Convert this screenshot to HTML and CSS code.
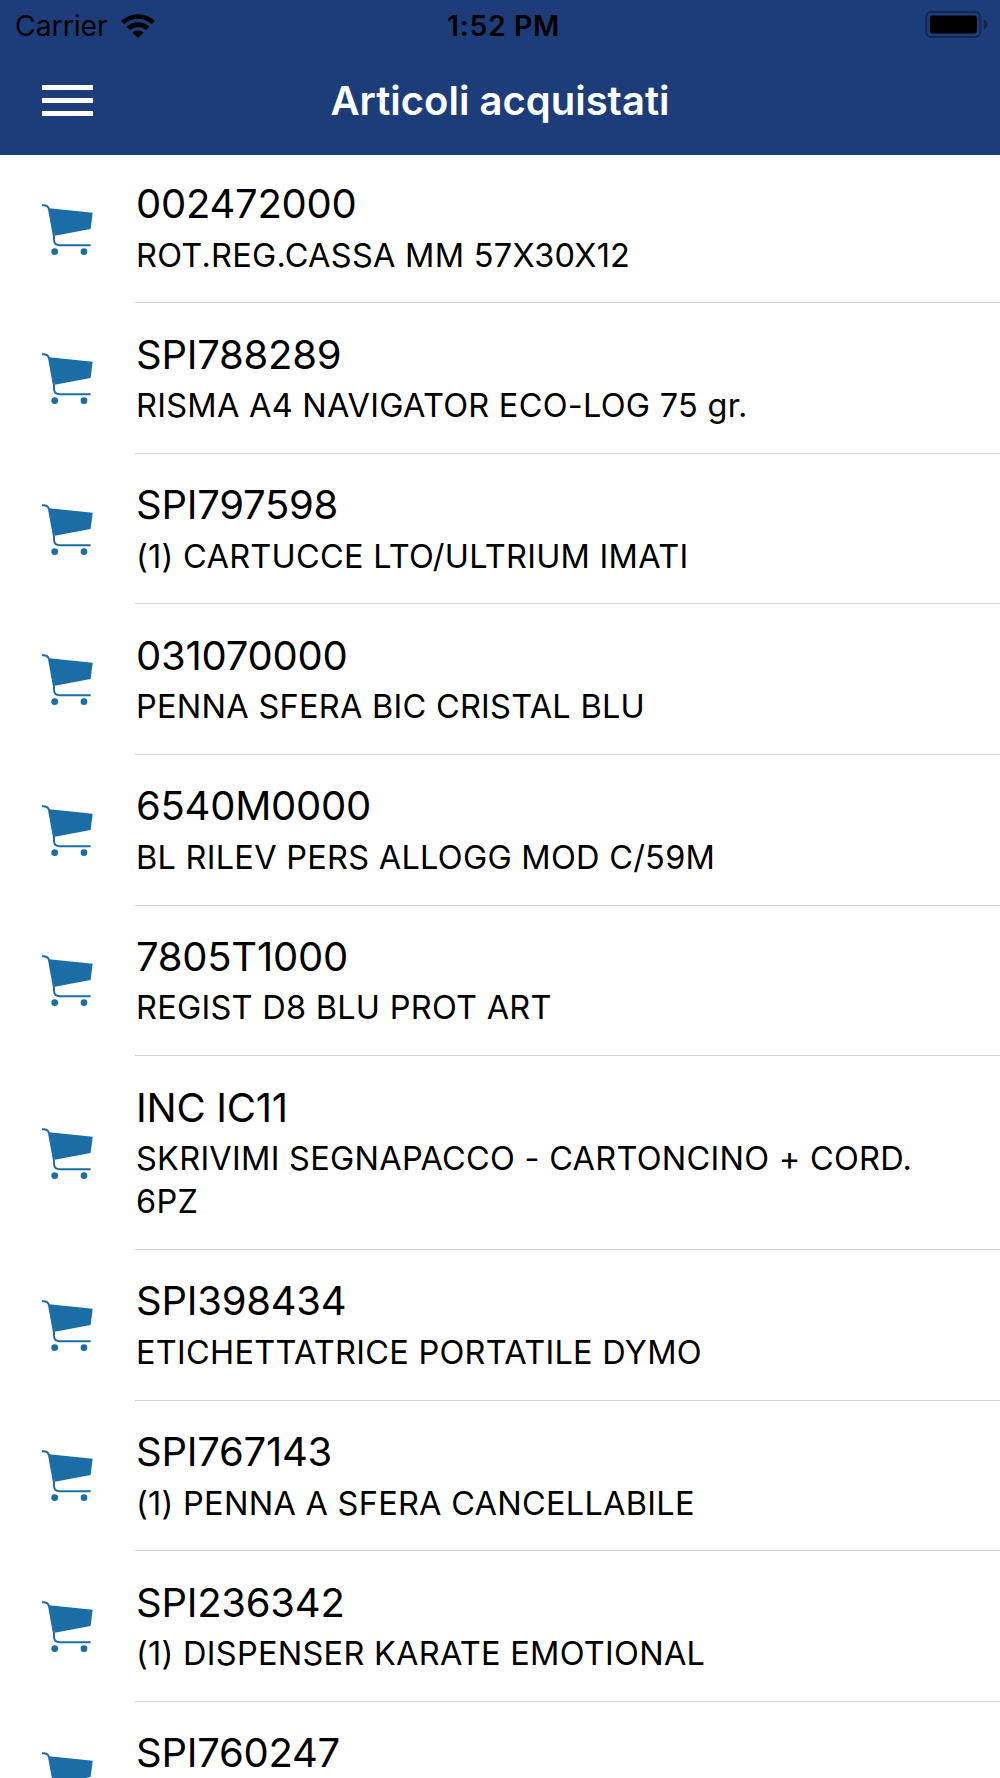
FILE: index.html
```
<!DOCTYPE html>
<html lang="it">
<head>
<meta charset="utf-8">
<title>Articoli acquistati</title>
<link rel="stylesheet" href="styles.css">
</head>
<body>
<header class="header">
  <div class="status">
    <div class="status-left">
      <span class="carrier">Carrier</span>
      <svg class="wifi" viewBox="0 0 102 73"><path d="M0 23A74 74 0 0 1 102 23L92 33A58 58 0 0 0 10 33Z"/><path d="M17 40A50 50 0 0 1 85 40L75 50A36 36 0 0 0 27 50Z"/><path d="M34 58A25 25 0 0 1 68 58L51 73Z"/></svg>
    </div>
    <span class="time">1:52 PM</span>
    <svg class="battery" viewBox="0 0 190 82"><rect x="3" y="3" width="164" height="76" rx="15" fill="none" stroke="#122850" stroke-width="6"/><rect x="14" y="14" width="143" height="54" rx="7"/><path d="M178 25Q189 30 189 41Q189 52 178 57Z" fill="#122850"/></svg>
  </div>
  <div class="navbar">
    <div class="menu"><i></i><i></i><i></i></div>
    <h1 class="title">Articoli acquistati</h1>
    <span></span>
  </div>
</header>
<svg class="defs" width="0" height="0">
  <symbol id="cart" viewBox="36 38 153 154">
    <path d="M57 51L188 64L182 113L74 133Z" fill="#1a6da5"/>
    <path d="M36 42C48 41 54 43 57 53L72 136V146Q73 162 89 162H182" fill="none" stroke="#1a6da5" stroke-width="6"/>
    <circle cx="74" cy="181" r="10" fill="#1a6da5"/><circle cx="162" cy="181" r="10" fill="#1a6da5"/>
  </symbol>
</svg>
<ul class="list">
  <li class="row"><svg class="cart"><use href="#cart"/></svg><div class="item"><div class="code">002472000</div><div class="desc">ROT.REG.CASSA MM 57X30X12</div></div></li>
  <li class="row"><svg class="cart"><use href="#cart"/></svg><div class="item"><div class="code">SPI788289</div><div class="desc">RISMA A4 NAVIGATOR ECO-LOG 75 gr.</div></div></li>
  <li class="row"><svg class="cart"><use href="#cart"/></svg><div class="item"><div class="code">SPI797598</div><div class="desc">(1) CARTUCCE LTO/ULTRIUM IMATI</div></div></li>
  <li class="row"><svg class="cart"><use href="#cart"/></svg><div class="item"><div class="code">031070000</div><div class="desc">PENNA SFERA BIC CRISTAL BLU</div></div></li>
  <li class="row"><svg class="cart"><use href="#cart"/></svg><div class="item"><div class="code">6540M0000</div><div class="desc">BL RILEV PERS ALLOGG MOD C/59M</div></div></li>
  <li class="row"><svg class="cart"><use href="#cart"/></svg><div class="item"><div class="code">7805T1000</div><div class="desc">REGIST D8 BLU PROT ART</div></div></li>
  <li class="row"><svg class="cart"><use href="#cart"/></svg><div class="item"><div class="code">INC IC11</div><div class="desc">SKRIVIMI SEGNAPACCO - CARTONCINO + CORD. 6PZ</div></div></li>
  <li class="row"><svg class="cart"><use href="#cart"/></svg><div class="item"><div class="code">SPI398434</div><div class="desc">ETICHETTATRICE PORTATILE DYMO</div></div></li>
  <li class="row"><svg class="cart"><use href="#cart"/></svg><div class="item"><div class="code">SPI767143</div><div class="desc">(1) PENNA A SFERA CANCELLABILE</div></div></li>
  <li class="row"><svg class="cart"><use href="#cart"/></svg><div class="item"><div class="code">SPI236342</div><div class="desc">(1) DISPENSER KARATE EMOTIONAL</div></div></li>
  <li class="row"><svg class="cart"><use href="#cart"/></svg><div class="item"><div class="code">SPI760247</div><div class="desc"></div></div></li>
</ul>
</body>
</html>
```
FILE: styles.css
```
* { box-sizing: border-box; }
body {
  margin: 0;
  height: 1778px;
  overflow: hidden;
  background: #fff;
  color: #000;
  font-family: Inter, "Liberation Sans", sans-serif;
}
.header {
  height: 155px;
  background: #1c3d79;
  border-bottom: 1px solid #24427a;
}
.status {
  height: 50px;
  display: grid;
  grid-template-columns: 1fr auto 1fr;
  align-items: center;
  padding: 0 12px 0 15px;
}
.status-left { display: flex; align-items: center; gap: 13px; }
.carrier { font-size: 28.3px; line-height: 50px; padding-top: 1px; }
.wifi { width: 34px; height: 25px; }
.time {
  font-size: 28.5px;
  font-weight: 600;
  line-height: 50px;
  letter-spacing: 0.6px;
  padding: 1px 0 0 4px;
}
.battery { width: 63px; height: 27px; justify-self: end; margin-bottom: 2px; }
.navbar {
  height: 100px;
  display: grid;
  grid-template-columns: 1fr auto 1fr;
  align-items: center;
  padding: 1px 42px 0;
}
.menu { display: flex; flex-direction: column; gap: 8.5px; width: 51px; }
.menu i { height: 4.4px; background: #fff; }
.title {
  margin: 0;
  padding-top: 1px;
  color: #fff;
  font-size: 40px;
  font-weight: 600;
  line-height: 50px;
}
.defs { display: block; }
.list { list-style: none; margin: 0; padding: 0; }
.row {
  display: flex;
  align-items: center;
  padding-left: 42px;
}
.cart { width: 51px; height: 51.3px; flex: none; }
.item {
  flex: 1;
  margin-left: 42px;
  padding: 24.3px 60px 25.5px 1px;
  border-bottom: 1px solid #d4d4d4;
}
.row:first-child .item { padding-top: 22px; }
.code {
  font-size: 40px;
  line-height: 53px;
  letter-spacing: -0.25px;
  margin-bottom: 3.5px;
}
.desc {
  font-size: 32.5px;
  line-height: 43.3px;
  min-height: 43.3px;
  letter-spacing: 0.26px;
}
```
